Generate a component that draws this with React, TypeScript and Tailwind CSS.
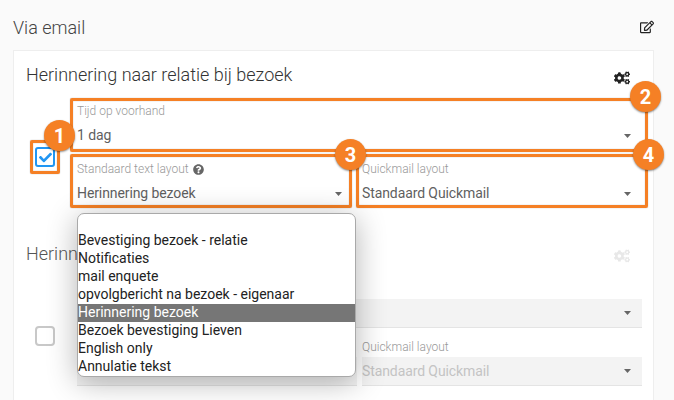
import React from "react";
import { FaCogs, FaQuestionCircle, FaCheck, FaRegEdit } from "react-icons/fa";

function Arrow() {
  return (
    <svg width="7" height="4" viewBox="0 0 7 4" className="shrink-0">
      <path d="M0 0h7L3.5 4z" fill="#666" />
    </svg>
  );
}

function Badge({ n, className }: { n: number; className: string }) {
  return (
    <div
      className={
        "absolute z-20 flex h-[31px] w-[31px] items-center justify-center rounded-full bg-[#f58025] text-[20px] font-bold leading-none text-white shadow-[0_1px_2px_rgba(0,0,0,0.45)] " +
        className
      }
    >
      {n}
    </div>
  );
}

function Field({
  label,
  value,
  help,
  disabled,
  className,
}: {
  label?: string;
  value?: string;
  help?: boolean;
  disabled?: boolean;
  className?: string;
}) {
  return (
    <div className={"relative " + (className ?? "")}>
      <div className="flex h-[20px] items-center gap-1 text-[12px] font-light leading-none text-[#999]">
        {label}
        {help && <FaQuestionCircle className="text-[11px] text-[#666]" />}
      </div>
      <div
        className={
          "flex h-[29px] items-center justify-between pr-[11px] text-[14px] tracking-[-0.1px] " +
          (disabled
            ? "border-b border-[#e4e4e4] bg-[#f3f3f3] text-[#c4c4c4]"
            : "text-[#5f5f5f]")
        }
      >
        <span>{value}</span>
        <Arrow />
      </div>
    </div>
  );
}

const options = [
  "",
  "Bevestiging bezoek - relatie",
  "Notificaties",
  "mail enquete",
  "opvolgbericht na bezoek - eigenaar",
  "Herinnering bezoek",
  "Bezoek bevestiging Lieven",
  "English only",
  "Annulatie tekst",
];

export default function App() {
  return (
    <div className="h-[400px] w-[674px] overflow-hidden bg-[#fafafa] pl-[13px] pr-[20px] font-['Roboto',sans-serif]">
      <div className="flex h-[50px] items-center justify-between pt-[5px]">
        <span className="text-[18px] font-light leading-none text-[#444]">Via email</span>
        <FaRegEdit className="mb-[1px] text-[14px] text-[#222]" />
      </div>

      <div className="h-[360px] border border-[#eeeeee] bg-white pl-[12px] pr-[11px]">
        {/* first block */}
        <div className="flex h-[47px] items-center justify-between pr-[12px] pt-[1px]">
          <span className="text-[18px] font-light leading-none text-[#333]">
            Herinnering naar relatie bij bezoek
          </span>
          <FaCogs className="mt-[6px] text-[16px] text-[#222]" />
        </div>
        <div className="flex">
          <div className="flex w-[51px] items-center pl-[9px] pt-[8px]">
            <div className="relative flex h-[20px] w-[20px] items-center justify-center rounded-[3px] border-2 border-[#2196f3] text-[#2196f3]">
              <FaCheck className="text-[13px]" />
              <div className="absolute -inset-x-[7px] -inset-y-[9px] rounded-[2px] border-[3px] border-[#f58025] shadow-[0_0_1px_rgba(0,0,0,0.45),inset_0_0_1px_rgba(0,0,0,0.45)]" />
              <Badge n={1} className="left-[7px] -top-[29px]" />
            </div>
          </div>
          <div className="flex-1">
            <div className="relative h-[57px] pt-[3px]">
              <Field label="Tijd op voorhand" value="1 dag" />
              <div className="absolute -left-[7px] -right-[6px] top-0 h-[54px] rounded-[2px] border-[3px] border-[#f58025] shadow-[0_0_1px_rgba(0,0,0,0.45),inset_0_0_1px_rgba(0,0,0,0.45)]" />
              <Badge n={2} className="-right-[19px] -top-[17px]" />
            </div>
            <div className="relative flex gap-[9px]">
              <div className="relative w-[276px]">
                <Field label="Standaard text layout" value="Herinnering bezoek" help className="mt-[4px]" />
                <div className="absolute -left-[7px] right-[1px] -top-[1px] h-[54px] rounded-[2px] border-[3px] border-[#f58025] shadow-[0_0_1px_rgba(0,0,0,0.45),inset_0_0_1px_rgba(0,0,0,0.45)]" />
                <Badge n={3} className="-right-[13px] -top-[16px]" />

                <div className="absolute left-0 top-[58px] z-30 h-[164px] w-[279px] overflow-hidden rounded-[7px] border border-[#a9a9a9] bg-white text-[14px] leading-[16px] text-[#222] shadow-[0_5px_30px_rgba(0,0,0,0.3)]">
                  {options.map((o, i) => (
                    <div
                      key={i}
                      className={
                        "h-[18px] whitespace-nowrap " +
                        (o === "Herinnering bezoek" ? "bg-[#767676] text-white" : "")
                      }
                    >
                      {o}
                    </div>
                  ))}
                </div>
              </div>
              <div className="relative flex-1">
                <Field label="Quickmail layout" value="Standaard Quickmail" className="mt-[4px]" />
                <div className="absolute -left-[6px] -right-[6px] -top-[1px] h-[54px] rounded-[2px] border-[3px] border-[#f58025] shadow-[0_0_1px_rgba(0,0,0,0.45),inset_0_0_1px_rgba(0,0,0,0.45)]" />
                <Badge n={4} className="-right-[22px] -top-[16px]" />
              </div>
            </div>
          </div>
        </div>

        {/* second block */}
        <div className="mt-[29px] flex h-[34px] items-center justify-between pr-[12px]">
          <span className="text-[18px] font-light leading-none text-[#555]">
            Herinnering naar relatie bij bezoek
          </span>
          <FaCogs className="mt-[3px] text-[16px] text-[#e8e8e8]" />
        </div>
        <div className="mt-[8px] flex">
          <div className="flex w-[51px] items-center pl-[9px] pt-[6px]">
            <div className="h-[20px] w-[20px] rounded-[4px] border-2 border-[#c8c8c8]" />
          </div>
          <div className="flex-1">
            <Field label="" value="" disabled />
            <div className="mt-[9px] flex gap-[5px]">
              <Field label="" value="" disabled className="w-[280px]" />
              <Field label="Quickmail layout" value="Standaard Quickmail" disabled className="flex-1" />
            </div>
          </div>
        </div>
      </div>
    </div>
  );
}
